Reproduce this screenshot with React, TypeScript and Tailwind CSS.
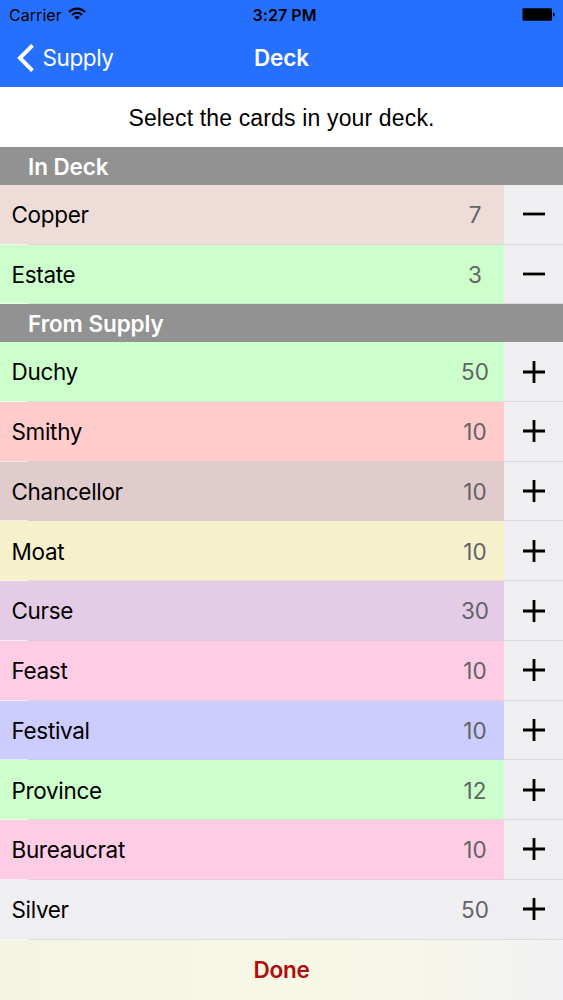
type Card = { name: string; count: number; color: string };

const inDeck: Card[] = [
  { name: 'Copper', count: 7, color: 'bg-[#eedcd8]' },
  { name: 'Estate', count: 3, color: 'bg-[#ccffcc]' },
];

const supply: Card[] = [
  { name: 'Duchy', count: 50, color: 'bg-[#ccffcc]' },
  { name: 'Smithy', count: 10, color: 'bg-[#ffcccb]' },
  { name: 'Chancellor', count: 10, color: 'bg-[#e0cccd]' },
  { name: 'Moat', count: 10, color: 'bg-[#f7f0cd]' },
  { name: 'Curse', count: 30, color: 'bg-[#e5cce6]' },
  { name: 'Feast', count: 10, color: 'bg-[#ffcce5]' },
  { name: 'Festival', count: 10, color: 'bg-[#ccccff]' },
  { name: 'Province', count: 12, color: 'bg-[#ccffcc]' },
  { name: 'Bureaucrat', count: 10, color: 'bg-[#ffcce5]' },
  { name: 'Silver', count: 50, color: 'bg-[#efeef0]' },
];

function SectionHeader({ title }: { title: string }) {
  return (
    <h2 className="flex h-[37.9px] shrink-0 items-center bg-[#929292] pl-7 pt-[2.5px] text-[22.5px] font-semibold leading-none tracking-[-0.08px] text-white">
      {title}
    </h2>
  );
}

function CardRow({ card, action }: { card: Card; action: 'add' | 'remove' }) {
  return (
    <li className="flex h-[59.74px] shrink-0 flex-col bg-[#efeef0]">
      <div className="flex min-h-0 flex-1">
        <div className={`flex w-[504px] items-center pl-[11.5px] ${card.color}`}>
          <span className="flex-1 pt-[2px] text-[22.5px] leading-none tracking-[-0.33px] text-black">{card.name}</span>
          <span className="w-[58px] pt-[2px] text-center text-[22.5px] leading-none text-[#636366]">{card.count}</span>
        </div>
        <button className="flex flex-1 items-center justify-center" aria-label={action}>
          <svg width="22" height="22" viewBox="0 0 22 22" stroke="#000" strokeWidth="2.8">
            <path d={action === 'add' ? 'M0 11H22M11 0V22' : 'M0 11H22'} />
          </svg>
        </button>
      </div>
      <div className="flex h-px shrink-0">
        <div className={`w-7 ${card.color}`}><div className="h-px bg-white/60" /></div>
        <div className={`w-[476px] ${card.color}`}><div className="h-px bg-[#c8c7cc]/40" /></div>
        <div className="flex-1 bg-[#d9d8db]" />
      </div>
    </li>
  );
}

export default function App() {
  return (
    <div className="flex h-[1000px] w-[563px] flex-col overflow-hidden bg-white font-['Inter',sans-serif]">
      <header className="h-[87px] shrink-0 bg-[#2670ff]">
        <div className="grid h-[29px] grid-cols-3 items-center pl-[9px] pr-2 text-[16px] leading-none text-black">
          <div className="flex items-center gap-[6px]">
            <span className="tracking-[0.05px]">Carrier</span>
            <svg className="-mt-[2px]" width="18" height="13" viewBox="0 0 18 13" fill="none" stroke="#000" strokeWidth="2.2">
              <path d="M1 5C5.5 0.4 12.5 0.4 17 5M4 8C7 5.2 11 5.2 14 8" />
              <path d="M9 13L6.1 10.1C7.7 8.6 10.3 8.6 11.9 10.1Z" fill="#000" stroke="none" />
            </svg>
          </div>
          <span className="whitespace-nowrap pl-[5px] text-center font-semibold tracking-[0.05px]">3:27 PM</span>
          <svg className="-mt-[1px] justify-self-end" width="33" height="13" viewBox="0 0 33 13">
            <rect x="0.5" y="0.2" width="29.5" height="12.6" rx="1.3" />
            <path d="M31 4.4C33.4 4.8 33.4 8.2 31 8.6Z" />
          </svg>
        </div>
        <nav className="grid h-[58px] grid-cols-3 items-center text-white">
          <div className="flex items-center gap-[8.5px] pl-[17px]">
            <svg width="17" height="28" viewBox="0 0 17 28" fill="none" stroke="#fff" strokeWidth="4">
              <path d="M15.5 1.4L2.9 14L15.5 26.6" />
            </svg>
            <span className="text-[22.5px] leading-none tracking-[-0.4px]">Supply</span>
          </div>
          <h1 className="text-center text-[22.5px] font-semibold leading-none tracking-[-0.1px]">Deck</h1>
        </nav>
      </header>
      <p className="flex h-[60px] shrink-0 items-center justify-center pt-[2px] font-['Liberation_Sans',sans-serif] text-[23px] leading-none tracking-[0.15px] text-black">
        Select the cards in your deck.
      </p>
      <SectionHeader title="In Deck" />
      <ul className="shrink-0">
        {inDeck.map((card) => <CardRow key={card.name} card={card} action="remove" />)}
      </ul>
      <SectionHeader title="From Supply" />
      <ul className="shrink-0">
        {supply.map((card) => <CardRow key={card.name} card={card} action="add" />)}
      </ul>
      <button className="flex min-h-0 flex-1 items-center justify-center bg-linear-to-r from-[#f4f4e2] via-[#f8f8e6] via-60% to-[#f2f1f3] pt-px text-[22.5px] font-semibold leading-none tracking-[-0.2px] text-[#b20b0b]">
        Done
      </button>
    </div>
  );
}
